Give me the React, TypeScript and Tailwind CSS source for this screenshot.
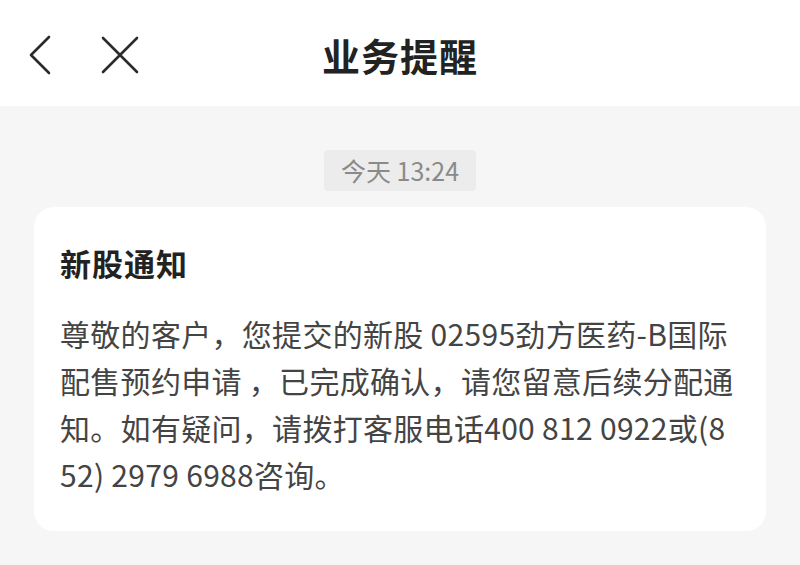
const lines = [
  "尊敬的客户，您提交的新股 02595劲方医药-B国际",
  "配售预约申请 ，已完成确认，请您留意后续分配通",
  "知。如有疑问，请拨打客服电话400 812 0922或(8",
  "52) 2979 6988咨询。",
];

const font = { fontFamily: '"Noto Sans CJK SC", "Noto Sans", sans-serif' };

export default function App() {
  return (
    <div className="w-[800px] h-[565px] bg-[#f6f6f6] overflow-hidden" style={font}>
      {/* Header */}
      <div className="h-[106px] bg-white grid grid-cols-[1fr_auto_1fr] items-center pt-[4px]">
        <div className="flex items-center pl-[28px] gap-[49px]">
          <svg width="24" height="40" viewBox="0 0 24 40" fill="none">
            <path d="M21 2 L3 20 L21 38" stroke="#2b2b2b" strokeWidth="2.6" strokeLinecap="round" strokeLinejoin="round" />
          </svg>
          <svg width="38" height="38" viewBox="0 0 38 38" fill="none">
            <path d="M2 2 L36 36 M36 2 L2 36" stroke="#2b2b2b" strokeWidth="2.6" strokeLinecap="round" />
          </svg>
        </div>
        <h1 className="text-[38px] leading-[44px] font-bold text-[#222] tracking-[1px]">业务提醒</h1>
        <div />
      </div>

      {/* Timestamp */}
      <div className="flex justify-center mt-[44px]">
        <div className="h-[41px] px-[17px] rounded-[4px] bg-[#ececec] text-[#8a8a8a] text-[25px] leading-[41px]">
          今天 13:24
        </div>
      </div>

      {/* Card */}
      <div className="mx-[34px] mt-[16px] bg-white rounded-[20px] pl-[26px] pr-[10px] pt-[35px] pb-[33px]">
        <h2 className="text-[31px] leading-[42px] font-bold text-[#222] tracking-[1px]">新股通知</h2>
        <div className="mt-[26px] text-[30px] leading-[47px] text-[#444] tracking-[0.3px]">
          {lines.map((l, i) => (
            <div key={i} className="whitespace-pre">
              {l}
            </div>
          ))}
        </div>
      </div>
    </div>
  );
}
